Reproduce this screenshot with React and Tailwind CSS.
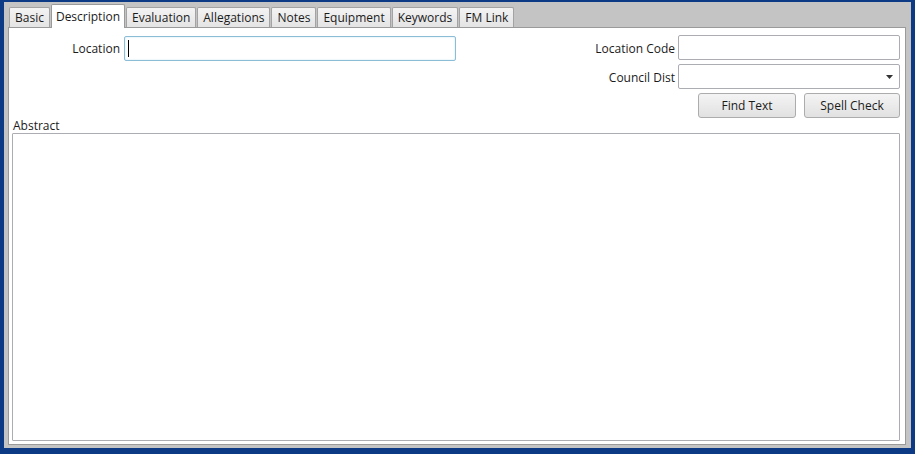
import { useState } from "react";

const tabs = ["Basic", "Description", "Evaluation", "Allegations", "Notes", "Equipment", "Keywords", "FM Link"];

const Field = ({ label, children }) => (
  <div className="flex items-center gap-[3px]">
    <span className="text-right pt-[2px]">{label}</span>
    {children}
  </div>
);

const App = () => {
  const [active, setActive] = useState("Description");

  return (
    <div
      className="w-[915px] h-[454px] bg-[#0c3a84] pt-[2px] pl-[4px] pr-[4px] pb-[6px] flex text-[12px] text-[#1b1b1b]"
      style={{ fontFamily: '"Open Sans", "Noto Sans", sans-serif' }}
    >
      <div className="flex-1 flex flex-col bg-[#c4c4c4] pl-[4px] pr-[5px] pb-[3px]">
        {/* tab strip */}
        <div className="h-[25px] flex items-end pl-[1px] gap-[1px]">
          {tabs.map((t) =>
            t === active ? (
              <button
                key={t}
                onClick={() => setActive(t)}
                className="h-[24px] -mb-px px-[4px] pt-[6px] flex items-start bg-white border border-b-0 border-[#9a9a9a] rounded-t-[2px] relative z-10 leading-none"
              >
                {t}
              </button>
            ) : (
              <button
                key={t}
                onClick={() => setActive(t)}
                className="h-[20px] px-[5px] flex items-center bg-gradient-to-b from-[#f3f3f3] to-[#e4e4e4] border border-b-0 border-[#a3a3a3] rounded-t-[2px] leading-none"
              >
                {t}
              </button>
            )
          )}
        </div>

        {/* content panel */}
        <div className="flex-1 flex flex-col bg-white border border-[#9a9a9a]">
          <div className="flex justify-between pt-[7px] pr-[5px]">
            <div className="flex items-center gap-[4px] self-start pt-[1px]">
              <span className="w-[111px] text-right">Location</span>
              <div className="w-[332px] h-[25px] border border-[#8bbdd6] rounded-[2px] shadow-[inset_0_0_2px_#c6e2ef] flex items-center pl-[3px]">
                <div className="w-px h-[17px] bg-black" />
              </div>
            </div>

            <div className="flex flex-col items-end gap-[4px]">
              <Field label="Location Code">
                <div className="w-[222px] h-[25px] border border-[#abadb3] rounded-[2px]" />
              </Field>
              <Field label="Council Dist">
                <div className="w-[222px] h-[25px] border border-[#abadb3] rounded-[2px] flex justify-end items-center">
                  <div className="w-[20px] h-full flex items-center justify-center">
                    <svg width="7" height="4" viewBox="0 0 7 4">
                      <path d="M0 0 L7 0 L3.5 4 Z" fill="#333" />
                    </svg>
                  </div>
                </div>
              </Field>
              <div className="flex gap-[8px]">
                <button className="w-[98px] h-[25px] border border-[#acacac] rounded-[3px] bg-gradient-to-b from-[#f4f4f4] to-[#e1e1e1]">
                  Find Text
                </button>
                <button className="w-[96px] h-[25px] border border-[#acacac] rounded-[3px] bg-gradient-to-b from-[#f4f4f4] to-[#e1e1e1]">
                  Spell Check
                </button>
              </div>
            </div>
          </div>

          <div className="pl-[4px] leading-[14px] mt-[1px]">Abstract</div>
          <textarea className="flex-1 mx-[3px] mr-[5px] mb-[3px] border border-[#abadb3] rounded-[1px] resize-none outline-none" />
        </div>
      </div>
    </div>
  );
};

export default App;
